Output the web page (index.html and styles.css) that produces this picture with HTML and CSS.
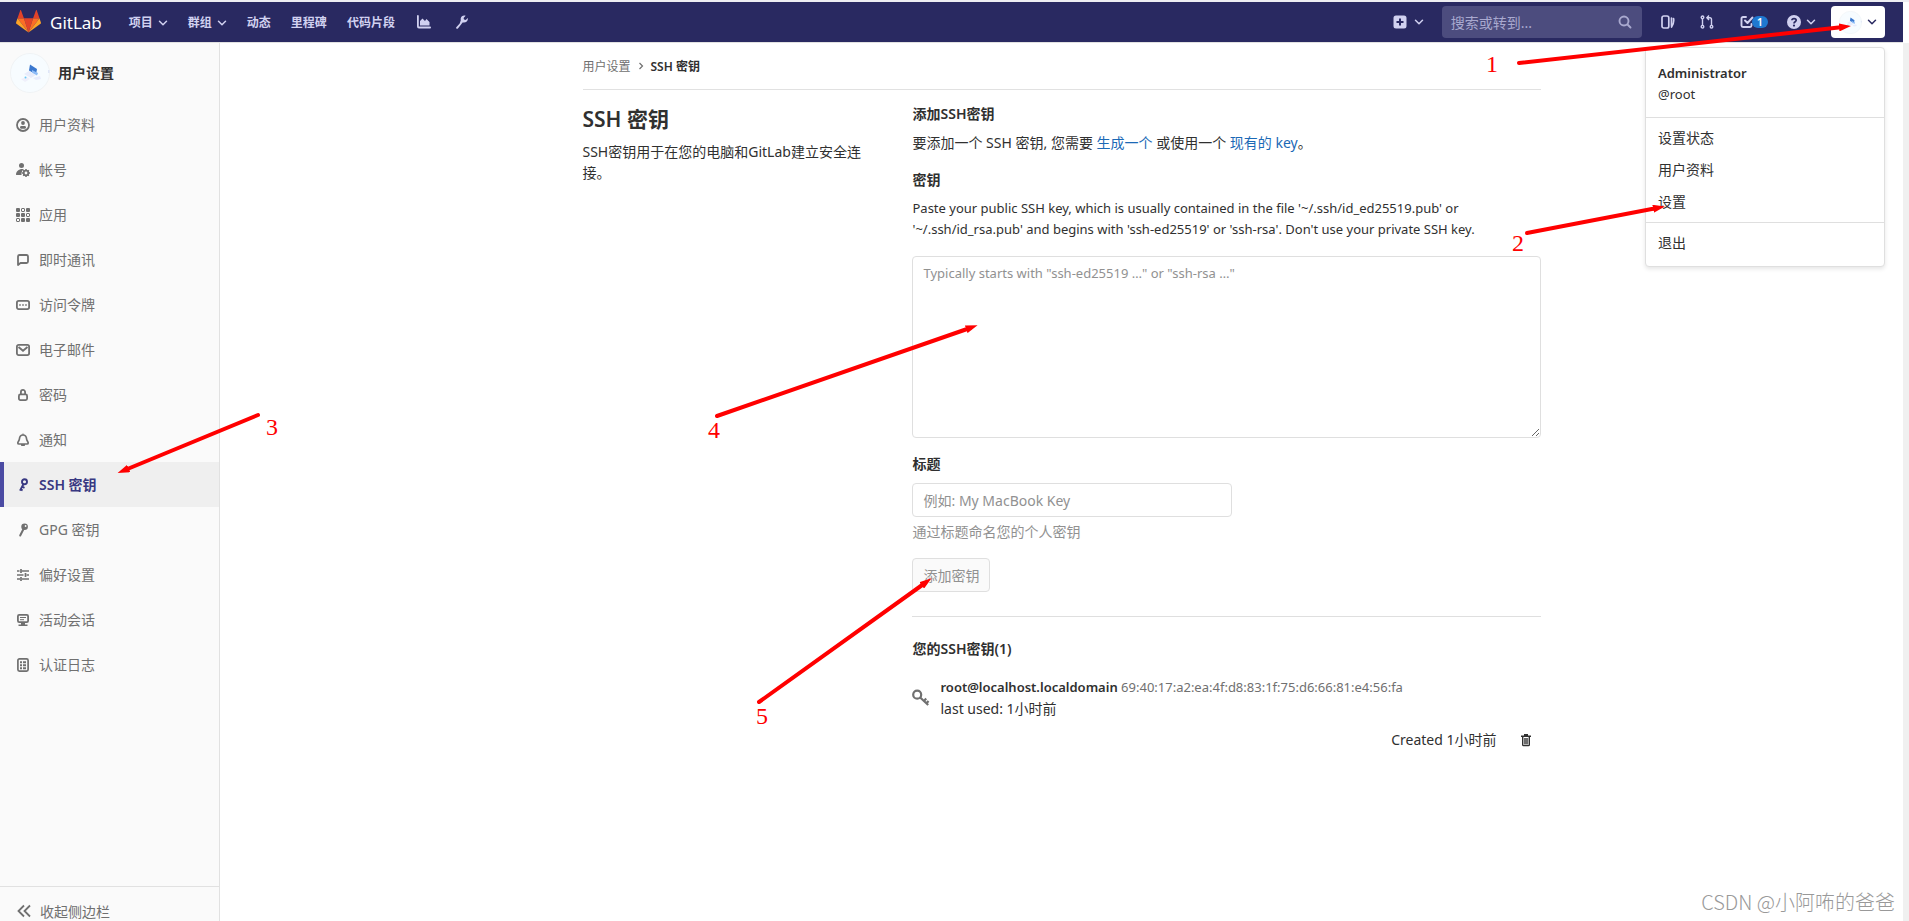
FILE: index.html
```html
<!DOCTYPE html>
<html lang="zh-CN">
<head>
<meta charset="utf-8">
<title>SSH 密钥 · 用户设置 · GitLab</title>
<meta name="viewport" content="width=device-width, initial-scale=1">
<link rel="stylesheet" href="styles.css">
</head>
<body>
<svg class="sprite" aria-hidden="true">
  <symbol id="chevron" viewBox="0 0 10 10"><path d="M1.5 3.2 5 6.7l3.5-3.5" fill="none" stroke="currentColor" stroke-width="1.500" stroke-linecap="round" stroke-linejoin="round"/></symbol>
  <symbol id="avatar" viewBox="0 0 40 40"><circle cx="20" cy="20" r="19.500" fill="#f7fcff" stroke="#f0f3f5"/><path d="m20 11.500 7 4.500-1 5.500-7-4z" fill="#3a78cf"/><path d="m22 17 6 3-1 2.500-5-2.500z" fill="#8ebcf6"/><path d="m14 21 5-3 7 4-5 3z" fill="#e8ecfb"/><path d="m11 26 6-2 3 2-5 3z" fill="#eff0fb"/><path d="m23 25 7-2 1 3-5 1z" fill="#e8ecfd"/><circle cx="15.500" cy="24.500" r="1" fill="#6cc8f5"/><path d="M38 17h1.500v3H38z" fill="#dfe6f8"/></symbol>
</svg>
<div class="page">
  <header class="navbar">
    <a class="brand" href="#">
      <svg class="logo" viewBox="0 0 25 24" aria-hidden="true"><path fill="#e24329" d="m12.500 22.500 4.600-14.200H7.900z"/><path fill="#fc6d26" d="M12.500 22.500 7.900 8.300H1.500z"/><path fill="#fca326" d="M1.500 8.300.1 12.600a1 1 0 0 0 .35 1.100L12.500 22.500z"/><path fill="#e24329" d="M1.500 8.300h6.400L5.100.4c-.1-.5-.7-.5-.9 0z"/><path fill="#fc6d26" d="m12.500 22.500 4.600-14.200h6.400z"/><path fill="#fca326" d="m23.500 8.300 1.400 4.300a1 1 0 0 1-.35 1.100L12.500 22.500z"/><path fill="#e24329" d="M23.500 8.300h-6.400L19.900.4c.1-.5.700-.5.900 0z"/></svg>
      <span>GitLab</span>
    </a>
    <nav class="nav-links">
      <a href="#">项目<svg class="caret"><use href="#chevron"/></svg></a>
      <a href="#">群组<svg class="caret"><use href="#chevron"/></svg></a>
      <a href="#">动态</a>
      <a href="#">里程碑</a>
      <a href="#">代码片段</a>
      <a href="#" aria-label="分析"><svg class="nav-icon" viewBox="0 0 14 14"><path d="M.9 1v10.500a1 1 0 0 0 1 1h11.200" fill="none" stroke="currentColor" stroke-width="1.800" stroke-linecap="round"/><path d="M3 10.500V6l2.500-2.500L8 6l1.500-2 3 3v3.500z" fill="currentColor"/></svg></a>
      <a href="#" class="wrench" aria-label="管理"><svg class="nav-icon" viewBox="0 0 14 14"><path d="M12.800 2.900 10.700 5 9 4.600 8.600 3l2-2.200C8.600-.1 6 1.100 5.700 3.600c-.1.600 0 1.200.1 1.700L4.700 8.400 1.300 12.200c-.8 1.300.9 2.300 1.600 1.200l3-3.700 1.700-2.300c3.100.9 5.900-1.300 5.200-4.500z" fill="currentColor"/></svg></a>
    </nav>
    <div class="nav-tools">
      <button class="tool plus" type="button" aria-label="新建"><svg class="icon" viewBox="0 0 14 14"><path fill="currentColor" fill-rule="evenodd" d="M3 .5h8A2.500 2.500 0 0 1 13.500 3v8a2.500 2.500 0 0 1-2.500 2.500H3A2.500 2.500 0 0 1 .5 11V3A2.500 2.500 0 0 1 3 .5zM6 3.500V6H3.500v2H6v2.500h2V8h2.500V6H8V3.500z"/></svg><svg class="caret"><use href="#chevron"/></svg></button>
      <label class="search"><input type="text" placeholder="搜索或转到..." aria-label="搜索或转到"><svg class="icon" viewBox="0 0 14 14"><g fill="none" stroke="currentColor" stroke-width="1.900" stroke-linecap="round"><circle cx="6" cy="6" r="4.500"/><path d="m9.500 9.500 3 3"/></g></svg></label>
      <a class="tool issues" href="#" aria-label="议题"><svg class="icon" viewBox="0 0 14 14"><g fill="none" stroke="currentColor" stroke-width="1.700" stroke-linecap="round"><rect x="1" y="1" width="6.800" height="12" rx="1.800"/><path d="M10.500 3v7.500"/><path d="M12.500 3.500c.6 2.500.2 5-2 8.500"/></g></svg></a>
      <a class="tool merges" href="#" aria-label="合并请求"><svg class="icon" viewBox="0 0 14 14"><g fill="none" stroke="currentColor" stroke-width="1.400"><circle cx="2.500" cy="2.300" r="1.300"/><circle cx="2.500" cy="11.700" r="1.300"/><circle cx="11.500" cy="11.700" r="1.300"/><path d="M2.500 3.600v6.800M11.500 10.400V4.500c0-1.200-.6-1.700-1.500-1.700H7.500M9 .600 6.900 2.800 9 5"/></g></svg></a>
      <a class="tool todos" href="#" aria-label="待办"><svg class="icon" viewBox="0 0 14 14"><g fill="none" stroke="currentColor" stroke-width="1.900" stroke-linecap="round" stroke-linejoin="round"><path d="M6 2H3a1.500 1.500 0 0 0-1.500 1.500v7A1.500 1.500 0 0 0 3 12h7a1.500 1.500 0 0 0 1.500-1.500V9"/><path d="m5 5.500 2.500 2.500 5-5.500"/></g></svg><span class="badge">1</span></a>
      <button class="tool help" type="button" aria-label="帮助"><svg class="icon" viewBox="0 0 14 14"><circle cx="7" cy="7" r="7" fill="currentColor"/><path d="M4.900 5.300C5 3 9.200 3 9.200 5.300 9.200 6.800 7 6.600 7 8.400" fill="none" stroke="#292961" stroke-width="1.700"/><circle cx="7" cy="10.600" r="1.100" fill="#292961"/></svg><svg class="caret"><use href="#chevron"/></svg></button>
      <div class="user">
        <button class="user-button" type="button" aria-label="Administrator" aria-expanded="true"><svg class="user-avatar"><use href="#avatar"/></svg><svg class="caret"><use href="#chevron"/></svg></button>
        <div class="menu">
          <div class="menu-group who"><strong>Administrator</strong><span>@root</span></div>
          <div class="menu-group"><a href="#">设置状态</a><a href="#">用户资料</a><a href="#">设置</a></div>
          <div class="menu-group last"><a href="#">退出</a></div>
        </div>
      </div>
    </div>
  </header>
  <div class="body">
    <aside class="sidebar">
      <a class="context" href="#"><svg class="context-avatar"><use href="#avatar"/></svg><span>用户设置</span></a>
      <nav class="side-links">
        <a href="#"><svg class="icon" viewBox="0 0 14 14"><circle cx="7" cy="7" r="6" fill="none" stroke="currentColor" stroke-width="1.800"/><circle cx="7" cy="5" r="1.900" fill="currentColor"/><rect x="4" y="8" width="6" height="2.800" rx="1.400" fill="currentColor"/></svg>用户资料</a>
        <a href="#"><svg class="icon" viewBox="0 0 14 14"><circle cx="5.500" cy="2.500" r="2.500" fill="currentColor"/><path d="M6.500 6C2.500 6 0 8.500 0 11.500c0 .5.500.5 1 .5h4.500C5.500 9.500 5.800 7.500 8 6.200z" fill="currentColor"/><circle cx="10" cy="10" r="2.300" fill="none" stroke="currentColor" stroke-width="1.800"/><path d="M10 6v1.500M10 12.500V14M6 10h1.500M12.500 10H14M7.200 7.200l1 1M11.800 11.800l1 1M12.800 7.200l-1 1M8.200 11.800l-1 1" stroke="currentColor" stroke-width="1.500"/></svg>帐号</a>
        <a href="#"><svg class="icon" viewBox="0 0 14 14"><g fill="currentColor"><rect width="4" height="4" rx="1"/><rect x="10" width="4" height="4" rx="1"/><rect y="5" width="4" height="4" rx="1"/><rect x="5" y="5" width="4" height="4" rx="1"/><rect x="5" y="10" width="4" height="4" rx="1"/><rect x="10" y="10" width="4" height="4" rx="1"/></g><g fill="none" stroke="currentColor"><rect x="5.500" y=".5" width="3" height="3" rx=".5"/><rect x="10.500" y="5.500" width="3" height="3" rx=".5"/><rect x=".5" y="10.500" width="3" height="3" rx=".5"/></g></svg>应用</a>
        <a href="#"><svg class="icon" viewBox="0 0 14 14"><path d="M2 12V3.500A1.500 1.500 0 0 1 3.500 2h7A1.500 1.500 0 0 1 12 3.500v5a1.500 1.500 0 0 1-1.500 1.500H4.500z" fill="none" stroke="currentColor" stroke-width="1.800" stroke-linejoin="round"/></svg>即时通讯</a>
        <a href="#"><svg class="icon" viewBox="0 0 14 14"><rect x=".9" y="2.900" width="12.200" height="8.200" rx="1.800" fill="none" stroke="currentColor" stroke-width="1.800"/><path d="M3.200 6.200h1.600v1.600H3.200zM6.200 6.200h1.600v1.600H6.200zM9.200 6.200h1.600v1.600H9.200z" fill="currentColor"/></svg>访问令牌</a>
        <a href="#"><svg class="icon" viewBox="0 0 14 14"><rect x=".9" y="1.900" width="12.200" height="10.200" rx="1.800" fill="none" stroke="currentColor" stroke-width="1.800"/><path d="m2.500 4 4.500 3.800L11.500 4" fill="none" stroke="currentColor" stroke-width="1.900"/></svg>电子邮件</a>
        <a href="#"><svg class="icon" viewBox="0 0 14 14"><g fill="none" stroke="currentColor" stroke-width="1.800"><rect x="2.900" y="6.400" width="8.200" height="5.700" rx="1.500"/><path d="M4.900 6V4a2.100 2.100 0 0 1 4.200 0v2"/></g></svg>密码</a>
        <a href="#"><svg class="icon" viewBox="0 0 14 14"><path d="M7 2C4.800 2 3.600 3.600 3.400 6 3.300 8 1.800 8.500 1.800 10c0 .7.400 1 1.200 1h8c.8 0 1.200-.3 1.200-1 0-1.500-1.500-2-1.600-4C10.400 3.600 9.200 2 7 2z" fill="none" stroke="currentColor" stroke-width="1.700"/><path d="M7 .5v1.500M5.500 11.500h3v1h-3z" stroke="currentColor"/></svg>通知</a>
        <a class="active" href="#"><svg class="icon" viewBox="0 0 14 14"><circle cx="8.500" cy="3.800" r="2.500" fill="none" stroke="currentColor" stroke-width="1.900"/><path d="M7.500 6 4 12.600M6 8.500l2.500 1.300M4.600 11.300l2 1" fill="none" stroke="currentColor" stroke-width="1.900"/></svg>SSH 密钥</a>
        <a href="#"><svg class="icon" viewBox="0 0 14 14"><circle cx="8.600" cy="3.800" r="3.300" fill="currentColor"/><circle cx="9.600" cy="3" r=".9" fill="#fafafa"/><path d="m7.500 6-3.300 6.500" stroke="currentColor" stroke-width="2" stroke-linecap="round"/></svg>GPG 密钥</a>
        <a href="#"><svg class="icon" viewBox="0 0 14 14"><path d="M1 3h2.500M5.500 3H13M1 7h6.500M10.500 7H13M1 11h3M6 11h7" stroke="currentColor" stroke-width="1.600"/><path d="M5 1v4M9.500 5v4M5 9v4" stroke="currentColor" stroke-width="1.700"/></svg>偏好设置</a>
        <a href="#"><svg class="icon" viewBox="0 0 14 14"><rect x="1.900" y="1.900" width="10.200" height="7.200" rx="1.300" fill="none" stroke="currentColor" stroke-width="1.800"/><path d="M4 4.500h6M4 6.700h4" stroke="currentColor"/><path d="M5 10h4v1.500h2.500V13h-9v-1.500H5z" fill="currentColor"/></svg>活动会话</a>
        <a href="#"><svg class="icon" viewBox="0 0 14 14"><rect x="1.900" y=".9" width="10.200" height="12.200" rx="1.500" fill="none" stroke="currentColor" stroke-width="1.700"/><path d="M4 3.200h2v2H4zM7 3.200h3v2H7zM4 6.200h2v2H4zM7 6.200h3v2H7zM4 9.200h2v2H4zM7 9.200h3v2H7z" fill="currentColor"/></svg>认证日志</a>
      </nav>
      <button class="collapse" type="button"><svg class="icon" viewBox="0 0 14 14"><path d="M7 1.500 1.500 7 7 12.500M13 1.500 7.500 7l5.500 5.500" fill="none" stroke="currentColor" stroke-width="1.800"/></svg>收起侧边栏</button>
    </aside>
    <main class="main">
      <div class="container">
        <nav class="breadcrumb" aria-label="面包屑"><a href="#">用户设置</a><svg class="crumb-sep" viewBox="0 0 8 8"><path d="M2.500 1 5.500 4l-3 3" fill="none" stroke="currentColor" stroke-width="1.200"/></svg><strong>SSH 密钥</strong></nav>
        <div class="row">
          <section class="intro">
            <h1>SSH 密钥</h1>
            <p>SSH密钥用于在您的电脑和GitLab建立安全连接。</p>
          </section>
          <section class="content">
            <h2>添加SSH密钥</h2>
            <p class="lead">要添加一个 SSH 密钥, 您需要 <a href="#">生成一个</a> 或使用一个 <a href="#">现有的 key</a>。</p>
            <form class="key-form">
              <label class="label" for="key">密钥</label>
              <p class="hint">Paste your public SSH key, which is usually contained in the file '~/.ssh/id_ed25519.pub' or '~/.ssh/id_rsa.pub' and begins with 'ssh-ed25519' or 'ssh-rsa'. Don't use your private SSH key.</p>
              <textarea id="key" placeholder="Typically starts with &quot;ssh-ed25519 …&quot; or &quot;ssh-rsa …&quot;"></textarea>
              <label class="label" for="title">标题</label>
              <input class="title-input" id="title" type="text" placeholder="例如: My MacBook Key">
              <p class="help-text">通过标题命名您的个人密钥</p>
              <button class="submit" type="submit" disabled>添加密钥</button>
            </form>
            <hr>
            <h2>您的SSH密钥(1)</h2>
            <ul class="keys">
              <li>
                <div class="key-info">
                  <svg class="key-icon" viewBox="0 0 18 18"><g fill="none" stroke="currentColor" stroke-width="2.200"><circle cx="5.200" cy="5.700" r="4"/><path d="m8.200 8.500 8 7.500M12 12l2.200-2.400M14.500 14.300l2-2.200"/></g></svg>
                  <div><div class="key-name"><strong>root@localhost.localdomain</strong> <span class="fingerprint">69:40:17:a2:ea:4f:d8:83:1f:75:d6:66:81:e4:56:fa</span></div><div>last used: 1小时前</div></div>
                </div>
                <div class="key-meta"><span>Created 1小时前</span><button type="button" aria-label="删除"><svg class="icon" viewBox="0 0 14 14"><path d="M2 2.500h3V1h4v1.500h3V4H2z" fill="currentColor"/><path d="M3.700 4v7.700c0 .6.300.9.900.9h4.800c.6 0 .9-.3.900-.9V4M6 5v6.500M8 5v6.500" fill="none" stroke="currentColor" stroke-width="1.400"/></svg></button></div>
              </li>
            </ul>
          </section>
        </div>
      </div>
    </main>
    <div class="scroll-track"></div>
  </div>
</div>
<svg class="annotations" viewBox="0 0 1909 921" aria-hidden="true">
  <defs><marker id="head" viewBox="0 0 12 8" refX="4" refY="4" markerWidth="12" markerHeight="8" markerUnits="userSpaceOnUse" orient="auto"><path d="M0 0 12 4 0 8z" fill="#f00"/></marker></defs>
  <g class="arrows">
    <path d="M1519 63 1843 27"/><path d="M1527 233 1657 208"/><path d="M258 415 125 470"/><path d="M717 416 970 328"/><path d="M759 702 925 583"/>
  </g>
  <g class="steps"><text x="1486" y="72">1</text><text x="1512" y="251">2</text><text x="266" y="435">3</text><text x="708" y="438">4</text><text x="756" y="724">5</text></g>
</svg>
<div class="watermark">CSDN @小阿咘的爸爸</div>
</body>
</html>
```
FILE: styles.css
```css
* { box-sizing: border-box; }
body {
  margin: 0;
  background: #fff;
  color: #303030;
  font: 14px/21px "Noto Sans", "Noto Sans CJK SC", sans-serif;
  overflow: hidden;
}
a { color: inherit; text-decoration: none; }
button, input, textarea { font: inherit; color: inherit; margin: 0; }
button { border: 0; padding: 0; background: none; }
h1, h2, p, ul { margin: 0; padding: 0; }
strong { font-weight: 600; }
svg { display: block; flex: none; }
.sprite { position: absolute; width: 0; height: 0; }
.icon { width: 14px; height: 14px; }
.caret { width: 10px; height: 10px; }

.page { display: flex; flex-direction: column; height: 100vh; border-top: 2px solid #ededf2; }
.navbar {
  flex: none;
  display: flex;
  align-items: center;
  height: 41px;
  margin-right: 6px;
  padding: 0 18px 0 16px;
  background: #292961;
  border-bottom: 1px solid #e1e1e1;
  color: #d1d1f0;
}
.brand { display: flex; align-items: center; gap: 9px; color: #fff; font-size: 17px; }
.logo { width: 25px; height: 24px; }
.nav-links { display: flex; align-items: center; gap: 20px; margin-left: 27px; font-size: 12px; font-weight: 600; }
.nav-links a { display: flex; align-items: center; gap: 5px; }
.nav-links .caret { margin-top: 2px; }
.nav-icon { width: 14px; height: 14px; margin-left: 2px; }
.wrench { margin-left: 2px; }
.nav-tools { display: flex; align-items: center; margin-left: auto; }
.tool { display: flex; align-items: center; color: inherit; }
.plus { gap: 7px; }
.search { position: relative; display: block; width: 200px; margin: 0 19px 0 18px; }
.search input { display: block; width: 100%; height: 32px; padding: 0 32px 0 9px; border: 0; border-radius: 4px; background: #4c4c7e; color: #d1d1f0; }
.search input::placeholder { color: #a9a9cf; opacity: 1; }
.search .icon { position: absolute; right: 10px; top: 9px; color: #a9a9cf; }
.merges { margin-left: 25px; }
.todos { margin-left: 26px; }
.badge { height: 12px; margin-left: -2px; padding: 0 5px; border-radius: 6px; background: #1f78d1; color: #fff; font-size: 11px; font-weight: 600; line-height: 12px; }
.help { margin: 0 15px 0 19px; gap: 5px; }
.user { position: relative; }
.user-button { display: flex; align-items: center; gap: 5px; width: 54px; height: 32px; padding: 0 8px; border-radius: 4px; background: #fff; color: #292961; }
.user-avatar { width: 23px; height: 23px; }
.menu { position: absolute; z-index: 2; top: 41px; right: 0; width: 240px; border: 1px solid #dfdfdf; border-radius: 4px; background: #fff; box-shadow: 0 2px 4px rgba(0,0,0,.1); color: #303030; }
.menu-group { display: flex; flex-direction: column; padding: 4px 12px; border-bottom: 1px solid #dfdfdf; }
.menu-group.who { padding: 15px 12px 12px; font-size: 13px; }
.menu-group a { line-height: 32px; }
.menu-group.last { padding-bottom: 7px; border-bottom: 0; }

.body { display: flex; flex: 1; min-height: 0; }
.sidebar { flex: none; display: flex; flex-direction: column; width: 220px; background: #fafafa; border-right: 1px solid #e1e1e1; color: #707070; }
.context { display: flex; align-items: center; gap: 8px; height: 59px; padding: 0 10px; color: #303030; font-weight: 600; }
.context-avatar { width: 40px; height: 40px; }
.side-links { display: flex; flex-direction: column; }
.side-links a { display: flex; align-items: center; gap: 9px; height: 45px; padding: 0 16px; }
.side-links .active { padding-left: 12px; border-left: 4px solid #4b4ba3; background: #efefef; color: #393982; font-weight: 600; }
.collapse { display: flex; align-items: center; gap: 9px; height: 35px; margin-top: auto; padding: 14px 17px 0; border-top: 1px solid #e1e1e1; }
.main { flex: 1; min-width: 0; }
.scroll-track { width: 6px; background: #f0f0f0; }
.container { max-width: 990px; margin: 0 auto; padding: 0 16px; }
.breadcrumb { display: flex; align-items: center; gap: 6px; height: 47px; border-bottom: 1px solid #e1e1e1; font-size: 12px; }
.breadcrumb a { color: #707070; }
.crumb-sep { width: 8px; height: 8px; color: #707070; }
.row { display: flex; margin: 0 -16px; padding-top: 13px; }
.intro { flex: 0 0 33.3333%; padding: 0 16px; }
.content { flex: 1; padding: 0 16px; }
h1 { margin-bottom: 6px; font-size: 21px; font-weight: 600; line-height: 32px; }
h2 { font-size: 14px; font-weight: 600; line-height: 21px; }
.lead { margin: 8px 0 16px; }
.lead a { color: #1b69b6; }
.label { display: block; font-weight: 600; }
.hint { margin: 8px 0 16px; font-size: 13px; }
textarea { display: block; width: 100%; height: 182px; margin-bottom: 15px; padding: 6px 10px; border: 1px solid #dfdfdf; border-radius: 4px; background: #fff; font-size: 13px; resize: vertical; outline: 0; }
.title-input { display: block; width: 320px; max-width: 100%; height: 34px; margin-top: 9px; padding: 0 10px; border: 1px solid #dfdfdf; border-radius: 4px; }
textarea::placeholder, .title-input::placeholder { color: #919191; opacity: 1; }
.help-text { margin: 4px 0 16px; color: #919191; }
.submit { height: 34px; padding: 0 10px; border: 1px solid #dfdfdf; border-radius: 4px; background: #fafafa; color: #919191; }
hr { height: 1px; margin: 24px 0 21px; border: 0; background: #dfdfdf; }
.keys { margin-top: 18px; list-style: none; }
.key-info { display: flex; align-items: center; gap: 10px; }
.key-icon { width: 18px; height: 18px; color: #707070; }
.key-name { font-size: 13px; }
.fingerprint { color: #707070; }
.key-meta { display: flex; align-items: center; justify-content: flex-end; gap: 22px; margin-top: 10px; padding-right: 8px; }

.annotations { position: absolute; z-index: 5; left: 0; top: 0; width: 1909px; height: 921px; pointer-events: none; }
.arrows path { fill: none; stroke: #f00; stroke-width: 4; stroke-linecap: round; marker-end: url(#head); }
.steps { fill: #f00; font-family: "Liberation Serif", serif; font-size: 24px; }
.watermark { position: absolute; z-index: 6; right: 14px; bottom: 4px; color: #999; font: 300 20px/30px "Noto Sans CJK SC", sans-serif; }
```
